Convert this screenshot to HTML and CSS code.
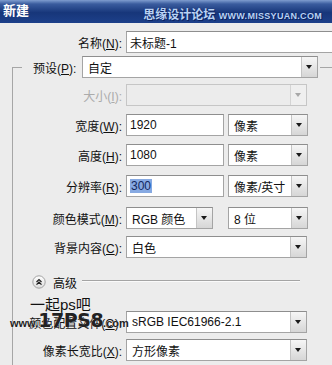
FILE: index.html
```html
<!DOCTYPE html>
<html lang="zh-CN">
<head>
    <meta charset="UTF-8">
    <title>新建</title>
    <link rel="stylesheet" href="styles.css">
</head>
<body>
    <div class="titlebar">
        <span class="title">新建</span>
        <span class="brand">思缘设计论坛 <small>WWW.MISSYUAN.COM</small></span>
    </div>

    <div class="dialog">
        <div class="row name-row">
            <span class="lbl">名称(<u>N</u>):</span>
            <div class="field w-name">未标题-1</div>
        </div>

        <fieldset class="group">
            <legend class="preset">
                <div class="preset-in">
                    <span class="plbl">预设(<u>P</u>):</span>
                    <div class="select w-preset">自定<span class="btn"></span></div>
                </div>
            </legend>

            <div class="row r-size">
                <span class="lbl off">大小(<u>I</u>):</span>
                <div class="select off w-full"><span class="btn"></span></div>
            </div>
            <div class="row r-width">
                <span class="lbl">宽度(<u>W</u>):</span>
                <div class="field w-num">1920</div>
                <div class="select w-unit">像素<span class="btn"></span></div>
            </div>
            <div class="row r-height">
                <span class="lbl">高度(<u>H</u>):</span>
                <div class="field w-num">1080</div>
                <div class="select w-unit">像素<span class="btn"></span></div>
            </div>
            <div class="row r-res">
                <span class="lbl">分辨率(<u>R</u>):</span>
                <div class="field w-num"><span class="sel">300</span></div>
                <div class="select w-unit">像素/英寸<span class="btn"></span></div>
            </div>
            <div class="row r-mode">
                <span class="lbl">颜色模式(<u>M</u>):</span>
                <div class="select w-mode">RGB 颜色<span class="btn"></span></div>
                <div class="select w-unit">8 位<span class="btn"></span></div>
            </div>
            <div class="row r-bg">
                <span class="lbl">背景内容(<u>C</u>):</span>
                <div class="select w-full">白色<span class="btn"></span></div>
            </div>

            <div class="advanced">
                <svg class="adv-icon" width="14" height="14" viewBox="0 0 14 14">
                    <defs>
                        <linearGradient id="g" x1="0" y1="0" x2="0" y2="1">
                            <stop offset="0" stop-color="#ffffff"/>
                            <stop offset="1" stop-color="#dcdcdc"/>
                        </linearGradient>
                    </defs>
                    <circle cx="7" cy="7" r="6.2" fill="url(#g)" stroke="#a2a2a2"/>
                    <path d="M4.5 7 L7 4.6 L9.5 7 M4.5 9.6 L7 7.2 L9.5 9.6" fill="none" stroke="#222" stroke-width="1.3"/>
                </svg>
                <span class="adv-text">高级</span>
                <span class="adv-line"></span>
            </div>

            <div class="row r-profile">
                <span class="lbl">颜色配置文件(<u>O</u>):</span>
                <div class="select w-full">sRGB IEC61966-2.1<span class="btn"></span></div>
                <div class="mark">
                    <span class="mark-top">一起ps吧</span>
                    <span class="mark-url">www.<b>17PS8</b>.com</span>
                </div>
            </div>
            <div class="row r-aspect">
                <span class="lbl">像素长宽比(<u>X</u>):</span>
                <div class="select w-full">方形像素<span class="btn"></span></div>
            </div>
        </fieldset>
    </div>
</body>
</html>
```

FILE: styles.css
```css
body {
    margin: 0;
    width: 332px;
    height: 365px;
    overflow: hidden;
    background: #ececec;
    font-family: 'Liberation Sans', 'Noto Sans CJK SC', sans-serif;
    font-size: 12px;
    color: #111;
}
.titlebar {
    height: 23px;
    display: flex;
    align-items: center;
    justify-content: space-between;
    padding: 0 10px 0 3px;
    background: linear-gradient(to bottom, #7f9dcf 0, #3a5c9e 4px, #17367a 55%, #1d408a 100%);
}
.title {
    color: #fff;
    font-weight: bold;
    font-size: 13px;
    margin-top: -4px;
}
.brand {
    color: #b9d2f4;
    font-size: 12px;
    font-weight: bold;
    margin-top: 4px;
    text-shadow: 0 0 1px #0b2260, 1px 1px 0 #0b2260;
}
.brand small {
    font-size: 9px;
    letter-spacing: 0.3px;
}
.dialog {
    padding-top: 8px;
}
.row {
    display: flex;
    align-items: center;
    height: 22px;
    position: relative;
}
.lbl {
    width: 122px;
    text-align: right;
    margin-right: 4px;
    flex-shrink: 0;
}
.group .lbl {
    width: 109px;
}
.lbl.off {
    color: #ababab;
}
.field, .select {
    box-sizing: border-box;
    height: 22px;
    background: #fff;
    border: 1px solid #a4a4a4;
    border-top-color: #8e8e8e;
    display: flex;
    align-items: center;
    padding-left: 3px;
    position: relative;
    flex-shrink: 0;
}
.select {
    padding-left: 5px;
}
.select.off {
    background: #ececec;
    border-color: #c6c6c6;
}
.btn {
    position: absolute;
    top: 0;
    right: 0;
    bottom: 0;
    width: 15px;
    border-left: 1px solid #c4c4c4;
    background: linear-gradient(to bottom, #f6f6f6, #d6d6d6);
}
.btn::after {
    content: "";
    position: absolute;
    left: 4px;
    top: 8px;
    border-left: 3.5px solid transparent;
    border-right: 3.5px solid transparent;
    border-top: 4px solid #1a1a1a;
}
.select.off .btn {
    background: #efefef;
    border-left-color: #d4d4d4;
}
.select.off .btn::after {
    border-top-color: #a8a8a8;
}
.sel {
    background: #86a9e2;
    color: #12285e;
    padding: 0 1px;
}
.w-name { width: 230px; }
.w-preset { width: 236px; }
.w-full { width: 181px; }
.w-num { width: 98px; margin-right: 4px; }
.w-unit { width: 80px; }
.w-mode { width: 87px; margin-right: 15px; }

.group {
    margin: 3px 0 0 12px;
    padding: 6px 0 20px 0;
    border: none;
    border-top: 1px solid #a6a6a6;
    border-left: 1px solid #a6a6a6;
    min-width: 0;
}
.preset {
    margin-left: 9px;
    padding: 0 2px 0 11px;
}
.preset-in {
    display: flex;
    align-items: center;
    height: 22px;
}
.plbl {
    width: 49px;
}
.r-width { margin-top: 8px; }
.r-height { margin-top: 8px; }
.r-res { margin-top: 9px; }
.r-mode { margin-top: 10px; }
.r-bg { margin-top: 7px; }
.r-profile { margin-top: 22px; }
.r-aspect { margin-top: 6px; }

.advanced {
    display: flex;
    align-items: center;
    height: 14px;
    margin-top: 17px;
    padding-left: 19px;
}
.adv-text {
    margin-left: 7px;
}
.adv-line {
    width: 218px;
    height: 1px;
    margin-left: 5px;
    margin-top: -3px;
    background: #a4a4a4;
    border-bottom: 1px solid #fafafa;
}
.mark {
    position: absolute;
    left: -3px;
    top: -14px;
    display: flex;
    flex-direction: column;
    line-height: 1;
    color: #111;
    pointer-events: none;
}
.mark-top {
    margin-left: 20px;
    font-size: 15px;
}
.mark-url {
    font-size: 11px;
    font-weight: bold;
    color: #222;
    margin-top: -1px;
    text-shadow: 0 0 1px #fff;
}
.mark-url b {
    font-size: 19px;
    font-family: 'DejaVu Sans', sans-serif;
    letter-spacing: -0.5px;
}
```
